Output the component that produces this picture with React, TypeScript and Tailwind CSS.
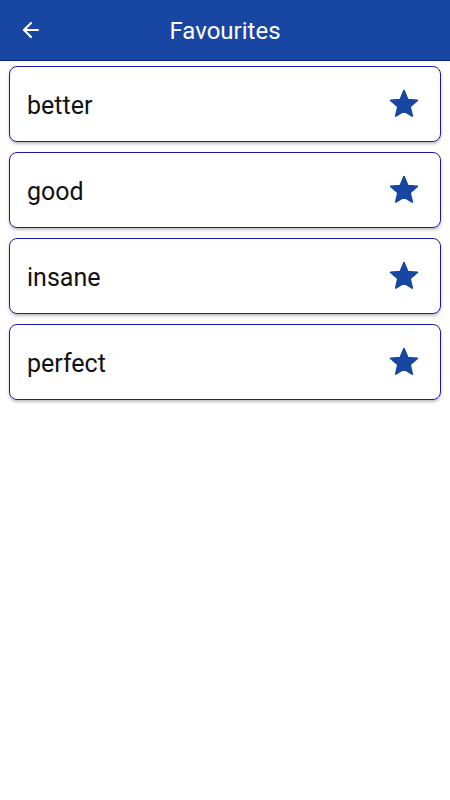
import { ArrowLeft } from 'lucide-react'

const words = ['better', 'good', 'insane', 'perfect']

const StarIcon = () => (
    <svg width="32" height="32" viewBox="0 0 24 24">
        <path
            d="M12 17.27L18.18 21l-1.64-7.03L22 9.24l-7.19-.61L12 2 9.19 8.63 2 9.24l5.46 4.73L5.82 21z"
            fill="#1846a3"
            stroke="#1846a3"
            strokeWidth="1.3"
            strokeLinejoin="round"
        />
    </svg>
)

const App = () => {
    return (
        <div className="w-[450px] h-[800px] bg-white" style={{ fontFamily: 'Roboto, sans-serif' }}>
            {/* Top bar */}
            <div className="h-[61px] bg-[#1846a3] border-b border-[#0a1f8f] flex items-center relative">
                <button className="absolute left-[19px] top-[18px] text-white">
                    <ArrowLeft size={24} strokeWidth={2.2} />
                </button>
                <h1 className="w-full text-center text-white text-[24px] pt-[2px]">Favourites</h1>
            </div>

            {/* List */}
            <div className="flex flex-col gap-[10px] px-[9px] pt-[5px]">
                {words.map((word) => (
                    <div
                        key={word}
                        className="h-[76px] border border-[#1a1ab0] rounded-[8px] shadow-[0_2px_3px_rgba(0,0,0,0.25)] flex items-center justify-between pl-[17px] pr-[20px]"
                    >
                        <span className="text-[25px] text-[#111] pt-[3px]">{word}</span>
                        <StarIcon />
                    </div>
                ))}
            </div>
        </div>
    )
}

export default App
